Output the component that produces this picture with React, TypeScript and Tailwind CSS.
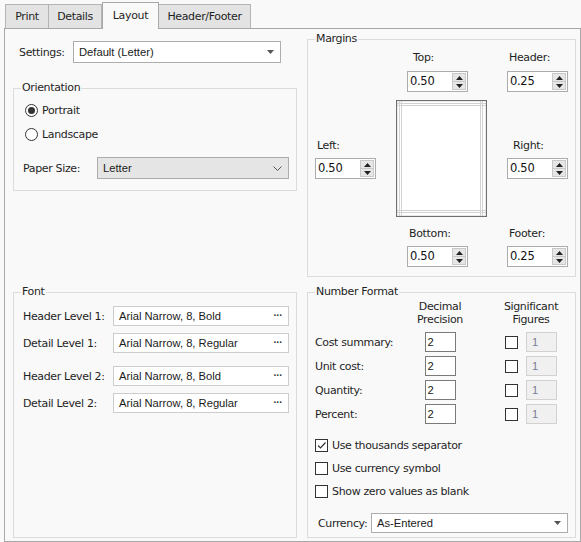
import React from "react";

const LBL = "font-['DejaVu_Sans',sans-serif] text-[11px] tracking-[-0.35px] text-[#1f1f1f] pt-[2px]";
const FLD = "font-['Liberation_Sans',sans-serif] text-[11.2px] text-[#1a1a1a] pt-[1px]";

function Legend({ children }: { children: React.ReactNode }) {
  return (
    <span className={`absolute left-[7px] -top-[9px] bg-[#f9f9f9] px-[1px] leading-[15px] ${LBL} !pt-0`}>
      {children}
    </span>
  );
}

function DropArrow() {
  return (
    <svg width="7" height="4" viewBox="0 0 7 4">
      <path d="M0 0 H7 L3.5 4 Z" fill="#555" />
    </svg>
  );
}

function Spinner({ value }: { value: string }) {
  return (
    <div className="flex h-[21px] w-[61px] border border-[#acacac] bg-white">
      <span className={`flex-1 pl-[2px] leading-[18px] font-['DejaVu_Sans',sans-serif] text-[11.5px] tracking-[-0.3px] text-[#111]`}>
        {value}
      </span>
      <div className="my-[1px] mr-[1px] flex w-[14px] flex-col border border-[#c8c8c8] bg-[#e6e6e6]">
        <div className="flex flex-1 items-center justify-center">
          <svg width="7" height="4" viewBox="0 0 7 4">
            <path d="M0 4 H7 L3.5 0 Z" fill="#222" />
          </svg>
        </div>
        <div className="h-px bg-[#c8c8c8]" />
        <div className="flex flex-1 items-center justify-center">
          <svg width="7" height="4" viewBox="0 0 7 4">
            <path d="M0 0 H7 L3.5 4 Z" fill="#222" />
          </svg>
        </div>
      </div>
    </div>
  );
}

function Label({ children, className = "" }: { children: React.ReactNode; className?: string }) {
  return <div className={`h-[14px] leading-[14px] ${LBL} !pt-px ${className}`}>{children}</div>;
}

function FontField({ label, value, className = "" }: { label: string; value: string; className?: string }) {
  return (
    <div className={`flex h-[20px] items-center ${className}`}>
      <span className={`w-[90px] ${LBL}`}>{label}</span>
      <div className="flex h-[20px] w-[176px] items-center border border-[#cdcdcd] bg-white pl-[5px] pr-[6px]">
        <span className={`flex-1 ${FLD}`}>{value}</span>
        <span className="font-['Liberation_Sans',sans-serif] text-[10px] font-bold leading-none tracking-[-0.5px] text-[#333]">···</span>
      </div>
    </div>
  );
}

function Checkbox({ checked = false }: { checked?: boolean }) {
  return (
    <div className="flex h-[13px] w-[13px] items-center justify-center border border-[#333] bg-white">
      {checked && (
        <svg width="11" height="11" viewBox="0 0 11 11">
          <path d="M2 5.5 L4.5 8 L9.5 2.5" fill="none" stroke="#333" strokeWidth="1.2" />
        </svg>
      )}
    </div>
  );
}

function NumRow({ label }: { label: string }) {
  return (
    <div className="flex h-[24px] items-center">
      <span className={`w-[95px] ${LBL}`}>{label}</span>
      <div className="flex w-[60px] justify-center">
        <div className={`h-[20px] w-[31px] border border-[#7a7a7a] bg-white pl-[2px] leading-[17px] ${FLD}`}>2</div>
      </div>
      <div className="ml-[20px] flex w-[82px] items-center justify-center gap-[8px]">
        <Checkbox />
        <div className={`h-[20px] w-[31px] border border-[#d2d2d2] bg-[#f0f0f0] pl-[5px] leading-[17px] ${FLD} !text-[#7c7c98]`}>1</div>
      </div>
    </div>
  );
}

function CheckRow({ label, checked = false }: { label: string; checked?: boolean }) {
  return (
    <div className="flex h-[23px] items-center">
      <Checkbox checked={checked} />
      <span className={`ml-[4px] ${LBL}`}>{label}</span>
    </div>
  );
}

function PagePreview() {
  return (
    <svg width="91" height="117" viewBox="0 0 91 117">
      <rect x="0.5" y="0.5" width="90" height="116" fill="#ffffff" stroke="#707070" strokeWidth="1.3" />
      <line x1="3.5" y1="1" x2="3.5" y2="116" stroke="#d2d2d2" />
      <line x1="5.5" y1="1" x2="5.5" y2="116" stroke="#d2d2d2" />
      <line x1="84.5" y1="1" x2="84.5" y2="116" stroke="#d2d2d2" />
      <line x1="86.5" y1="1" x2="86.5" y2="116" stroke="#d2d2d2" />
      <line x1="1" y1="3.5" x2="90" y2="3.5" stroke="#d2d2d2" />
      <line x1="1" y1="5.5" x2="90" y2="5.5" stroke="#d2d2d2" />
      <line x1="1" y1="110.5" x2="90" y2="110.5" stroke="#d2d2d2" />
      <line x1="1" y1="112.5" x2="90" y2="112.5" stroke="#d2d2d2" />
    </svg>
  );
}

export default function App() {
  return (
    <div className="h-[542px] w-[581px] overflow-hidden bg-[#f9f9f9]">
      {/* Tabs */}
      <div className="flex h-[28px] items-end pl-[5px]">
        <div className={`flex h-[24px] w-[44px] items-center justify-center border border-b-0 border-[#b4b4b4] bg-[#e3e3e3] ${LBL}`}>Print</div>
        <div className={`flex h-[24px] w-[53px] items-center justify-center border border-b-0 border-l-0 border-[#b4b4b4] bg-[#e3e3e3] ${LBL}`}>Details</div>
        <div className={`relative z-10 -mb-px flex h-[27px] w-[57px] items-center justify-center border border-b-0 border-[#a8a8a8] bg-[#f9f9f9] pb-[2px] ${LBL}`}>Layout</div>
        <div className={`-ml-px flex h-[24px] w-[93px] items-center justify-center border border-b-0 border-[#b4b4b4] bg-[#e3e3e3] ${LBL}`}>Header/Footer</div>
      </div>

      {/* Panel */}
      <div className="ml-[4px] flex h-[514px] w-[577px] border border-[#a8a8a8] pl-[8px]">
        {/* Left column */}
        <div className="flex w-[284px] flex-col">
          <div className="mt-[12px] flex h-[22px] items-center">
            <span className={`w-[60px] pl-[6px] ${LBL}`}>Settings:</span>
            <div className="flex h-[22px] w-[208px] items-center border border-[#adadad] bg-white pl-[5px] pr-[6px]">
              <span className={`flex-1 ${FLD}`}>Default (Letter)</span>
              <DropArrow />
            </div>
          </div>

          <div className="relative mt-[25px] h-[103px] border border-[#dcdcdc]">
            <Legend>Orientation</Legend>
            <div className="flex flex-col pl-[11px] pt-[9px]">
              <div className="flex h-[24px] items-center">
                <div className="flex h-[13px] w-[13px] items-center justify-center rounded-full border border-[#333] bg-white">
                  <div className="h-[7px] w-[7px] rounded-full bg-[#333]" />
                </div>
                <span className={`ml-[4px] ${LBL}`}>Portrait</span>
              </div>
              <div className="flex h-[24px] items-center">
                <div className="h-[13px] w-[13px] rounded-full border border-[#333] bg-white" />
                <span className={`ml-[4px] ${LBL}`}>Landscape</span>
              </div>
            </div>
            <div className="mt-[11px] flex h-[22px] items-center pl-[9px]">
              <span className={`w-[74px] ${LBL}`}>Paper Size:</span>
              <div className="flex h-[22px] w-[192px] items-center border border-[#adadad] bg-[#e5e5e5] pl-[5px] pr-[6px]">
                <span className={`flex-1 ${FLD}`}>Letter</span>
                <svg width="9" height="5" viewBox="0 0 9 5">
                  <path d="M0.5 0.5 L4.5 4.5 L8.5 0.5" fill="none" stroke="#555" strokeWidth="1" />
                </svg>
              </div>
            </div>
          </div>

          <div className="relative mt-[101px] h-[246px] border border-[#dcdcdc] pl-[9px] pt-[13px]">
            <Legend>Font</Legend>
            <FontField label="Header Level 1:" value="Arial Narrow, 8, Bold" />
            <FontField className="mt-[7px]" label="Detail Level 1:" value="Arial Narrow, 8, Regular" />
            <FontField className="mt-[13px]" label="Header Level 2:" value="Arial Narrow, 8, Bold" />
            <FontField className="mt-[7px]" label="Detail Level 2:" value="Arial Narrow, 8, Regular" />
          </div>
        </div>

        {/* Right column */}
        <div className="ml-[10px] flex w-[269px] flex-col">
          <div className="relative mt-[10px] flex h-[238px] border border-[#dcdcdc]">
            <Legend>Margins</Legend>
            <div className="ml-[7px] flex w-[62px] flex-col pt-[98px]">
              <Label className="pl-[2px]">Left:</Label>
              <div className="mt-[6px]"><Spinner value="0.50" /></div>
            </div>
            <div className="ml-[19px] flex w-[91px] flex-col pt-[10px]">
              <Label className="pl-[17px]">Top:</Label>
              <div className="ml-[11px] mt-[7px]"><Spinner value="0.50" /></div>
              <div className="mt-[8px] h-[117px]"><PagePreview /></div>
              <Label className="mt-[9px] pl-[13px]">Bottom:</Label>
              <div className="ml-[11px] mt-[6px]"><Spinner value="0.50" /></div>
            </div>
            <div className="ml-[20px] flex w-[62px] flex-col pt-[10px]">
              <Label className="pl-[2px]">Header:</Label>
              <div className="mt-[7px]"><Spinner value="0.25" /></div>
              <Label className="mt-[46px] pl-[6px]">Right:</Label>
              <div className="mt-[6px]"><Spinner value="0.50" /></div>
              <Label className="mt-[47px] pl-[2px]">Footer:</Label>
              <div className="mt-[6px]"><Spinner value="0.25" /></div>
            </div>
          </div>

          <div className="relative mt-[15px] h-[246px] border border-[#dcdcdc] pl-[7px] pt-[7px]">
            <Legend>Number Format</Legend>
            <div className="flex">
              <div className="w-[95px]" />
              <div className={`w-[60px] text-center leading-[13px] ${LBL} !pt-0`}>
                Decimal<br />Precision
              </div>
              <div className={`ml-[20px] w-[82px] text-center leading-[13px] ${LBL} !pt-0`}>
                Significant<br />Figures
              </div>
            </div>
            <div className="mt-[4px]">
              <NumRow label="Cost summary:" />
              <NumRow label="Unit cost:" />
              <NumRow label="Quantity:" />
              <NumRow label="Percent:" />
            </div>
            <div className="mt-[8px]">
              <CheckRow label="Use thousands separator" checked />
              <CheckRow label="Use currency symbol" />
              <CheckRow label="Show zero values as blank" />
            </div>
            <div className="mt-[10px] flex h-[20px] items-center pl-[3px]">
              <span className={`w-[53px] ${LBL}`}>Currency:</span>
              <div className="flex h-[20px] w-[197px] items-center border border-[#adadad] bg-white pl-[5px] pr-[6px]">
                <span className={`flex-1 ${FLD}`}>As-Entered</span>
                <DropArrow />
              </div>
            </div>
          </div>
        </div>
      </div>
    </div>
  );
}
